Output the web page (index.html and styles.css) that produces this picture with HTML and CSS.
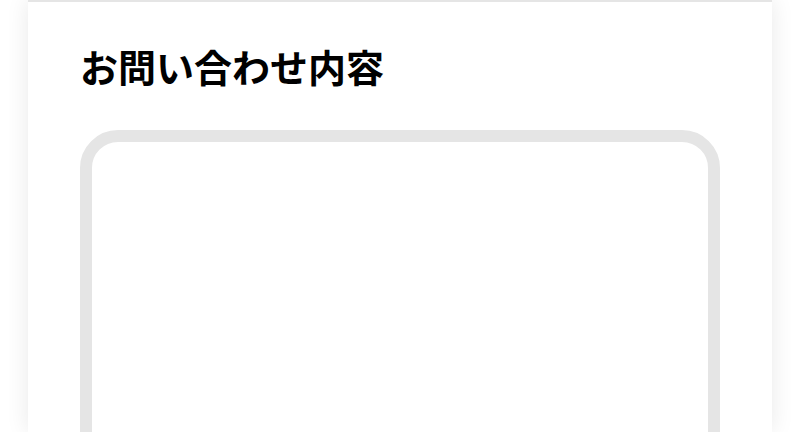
FILE: index.html
```html
<!DOCTYPE html>
<html lang="ja">
<head>
<meta charset="utf-8">
<title>お問い合わせ内容</title>
<link rel="stylesheet" href="styles.css">
</head>
<body>
<main class="card">
  <h1 class="title">お問い合わせ内容</h1>
  <textarea class="message" aria-label="お問い合わせ内容"></textarea>
</main>
</body>
</html>
```

FILE: styles.css
```css
html, body {
  margin: 0;
  padding: 0;
  background: #ffffff;
  height: 100%;
  overflow: hidden;
}
body {
  font-family: "Noto Sans CJK JP", "Noto Sans", sans-serif;
  color: #000;
}
.card {
  width: 744px;
  height: 432px;
  margin: 0 auto;
  box-sizing: border-box;
  overflow: hidden;
  background: #fff;
  border-top: 2px solid #e5e5e5;
  box-shadow: 0 0 22px rgba(0, 0, 0, 0.09);
  padding: 37px 52px 0;
  display: flex;
  flex-direction: column;
}
.title {
  margin: 0;
  font-size: 38px;
  font-weight: 700;
  line-height: 53px;
}
.message {
  display: block;
  flex: none;
  box-sizing: border-box;
  width: 640px;
  height: 420px;
  margin: 38px 0 0;
  border: 12px solid #e5e5e5;
  border-radius: 38px;
  background: #fff;
  resize: none;
  outline: none;
  padding: 16px;
}
```
